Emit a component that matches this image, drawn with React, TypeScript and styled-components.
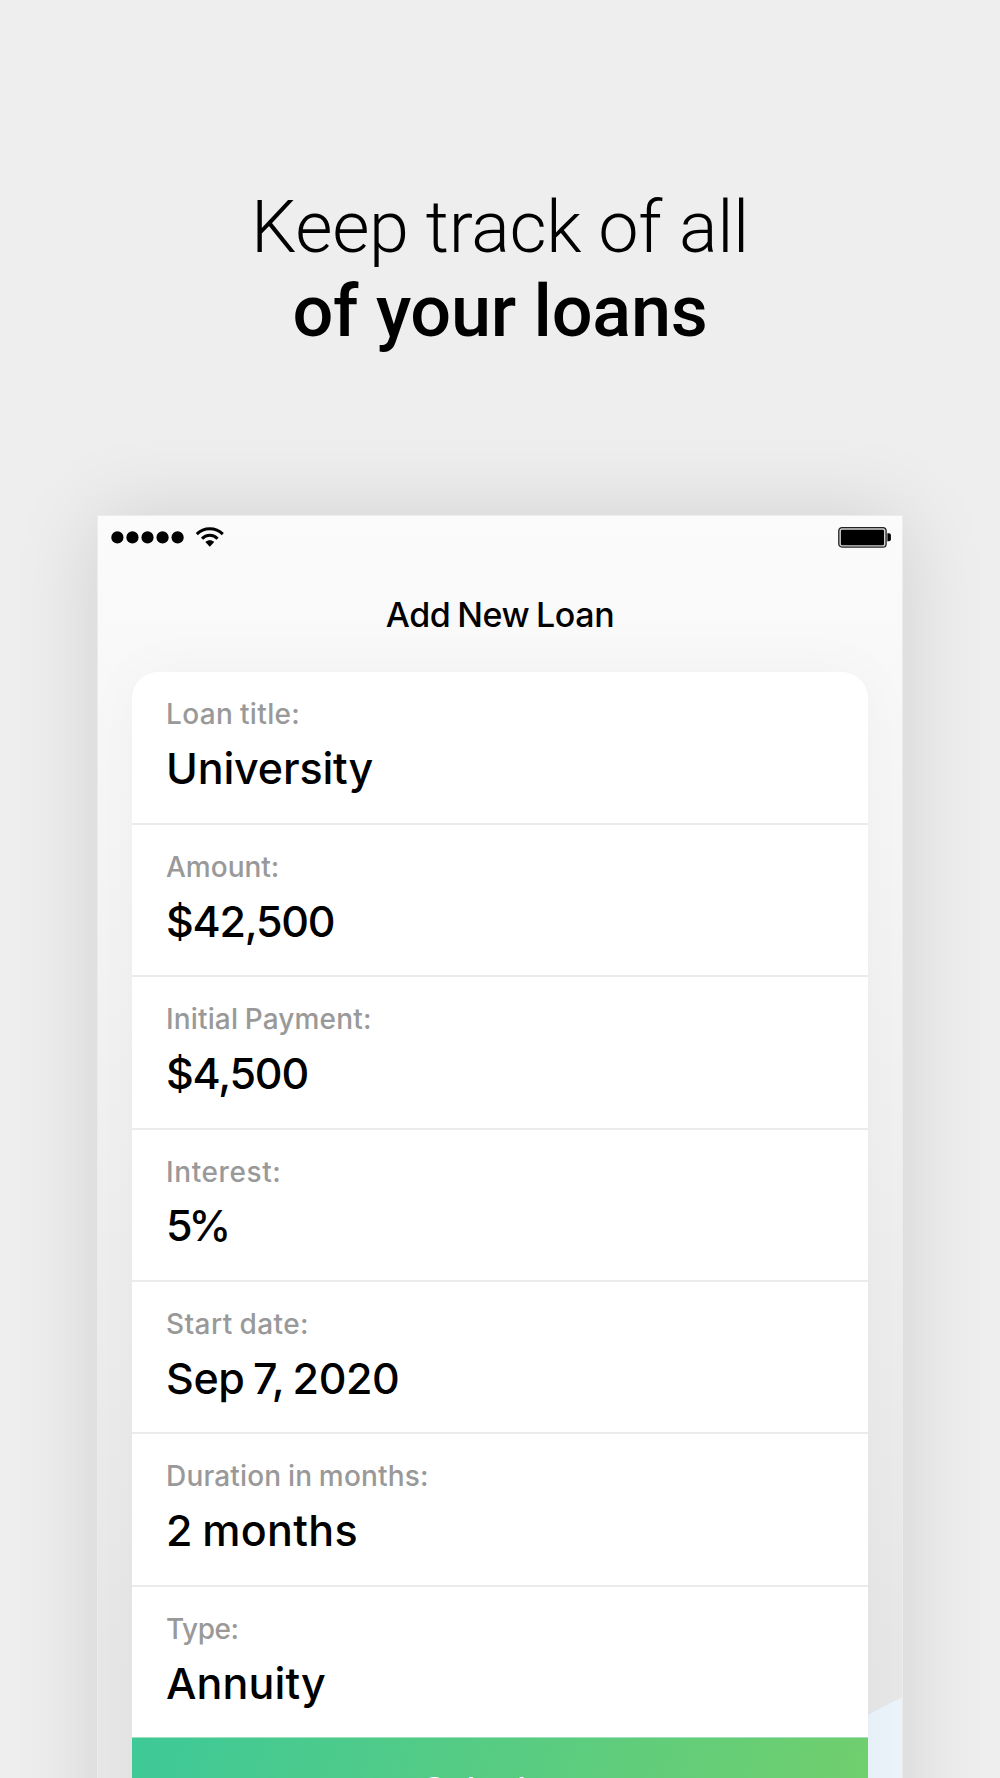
import React from "react";
import styled, { createGlobalStyle } from "styled-components";

const GlobalStyle = createGlobalStyle`
  *, *::before, *::after { box-sizing: border-box; }
  body { margin: 0; background: #eeeeee; }
`;

const Page = styled.main`
  height: 1778px;
  padding: 186px 97px 0;
  overflow: hidden;
  background: #eeeeee;
  color: #000;
  font-family: Inter, "Noto Sans", sans-serif;
`;

const Headline = styled.h1`
  margin: 0;
  height: 329px;
  font: 300 72px/84.4px Roboto, sans-serif;
  letter-spacing: -0.35px;
  text-align: center;
  white-space: nowrap;
`;

const Strong = styled.strong`
  display: block;
  font-weight: 500;
  letter-spacing: -0.25px;
`;

const Phone = styled.section`
  position: relative;
  height: 1400px;
  border: 1px solid #ececec;
  background: linear-gradient(#fbfbfb 0, #f9f9f9 110px, #e7e7e7 1150px);
  box-shadow: 0 2px 80px rgba(0, 0, 0, 0.128);
  overflow: hidden;
`;

const Blob = styled.div`
  position: absolute;
  left: 621px;
  top: 1158px;
  width: 600px;
  height: 600px;
  border-radius: 50%;
  background: #ebf3fb;
`;

const StatusBar = styled.div`
  display: flex;
  align-items: flex-start;
  gap: 10px;
  height: 78px;
  padding: 10px 10px 0 13px;
`;

const BatterySlot = styled.div`
  margin-left: auto;
  height: 23px;
`;

const Title = styled.h2`
  margin: 0 0 36.4px;
  font-size: 34px;
  font-weight: 500;
  line-height: 42px;
  letter-spacing: -0.4px;
  word-spacing: -2px;
  text-align: center;
`;

const Card = styled.div`
  position: relative;
  margin: 0 34px;
  border-radius: 26px 26px 0 0;
  background: #fff;
  box-shadow: 0 0 60px rgba(0, 0, 0, 0.035);
  overflow: hidden;
`;

const Field = styled.div`
  height: 152.4px;
  padding: 25px 34px 0;
  border-bottom: 2px solid #ebebeb;

  &:last-of-type {
    height: 150.4px;
    border-bottom: 0;
  }
`;

const Label = styled.div<{ $tracking: number }>`
  color: #999;
  font-size: 28px;
  font-weight: 500;
  line-height: 34px;
  letter-spacing: ${(p) => p.$tracking}px;
  word-spacing: -1px;
`;

const Value = styled.div<{ $tracking: number }>`
  margin-top: 10.9px;
  font-size: 43px;
  font-weight: 500;
  line-height: 52px;
  letter-spacing: ${(p) => p.$tracking}px;
  word-spacing: -2.5px;
`;

const Button = styled.button`
  display: flex;
  justify-content: center;
  width: 100%;
  height: 114px;
  padding: 30.4px 0 0;
  border: 0;
  border-top: 1px solid #a3dfba;
  background: linear-gradient(108deg, #3ec998, #72cf6c);
  color: #fff;
  font: 500 34px/42px Inter, sans-serif;
  letter-spacing: 0.6px;
`;

const fields = [
  { label: "Loan title:", value: "University", lt: 0.35, vt: -0.15 },
  { label: "Amount:", value: "$42,500", lt: 0, vt: -1.25 },
  { label: "Initial Payment:", value: "$4,500", lt: 0.15, vt: -1.2 },
  { label: "Interest:", value: "5%", lt: 0.6, vt: -4.2 },
  { label: "Start date:", value: "Sep 7, 2020", lt: 0.42, vt: -0.4 },
  { label: "Duration in months:", value: "2 months", lt: 0.17, vt: 0.35 },
  { label: "Type:", value: "Annuity", lt: -0.5, vt: 0.1 },
];

function SignalIcon() {
  return (
    <svg width="74" height="22" viewBox="0 0 74 22">
      {[0, 1, 2, 3, 4].map((n) => (
        <circle key={n} cx={6.4 + n * 15.05} cy="11.4" r="6.1" fill="#000" />
      ))}
    </svg>
  );
}

function WifiIcon() {
  return (
    <svg width="30" height="21.7" viewBox="0 0 29 21" fill="none" stroke="#000" strokeWidth="2.9">
      <path d="M1.7 7.9A17.9 17.9 0 0 1 26.9 7.9" />
      <path d="M6.8 12.3A10 10 0 0 1 21.8 12.3" />
      <path d="M10 15.6C12.4 13.1 16.2 13.1 18.6 15.6L14.3 20.2Z" fill="#000" stroke="none" />
    </svg>
  );
}

function BatteryIcon() {
  return (
    <svg width="54" height="22" viewBox="0 0 54 22">
      <rect x="0.8" y="1.6" width="47.3" height="19.5" rx="3.2" fill="#d2d2d2" stroke="#222" strokeWidth="1.3" />
      <rect x="2.9" y="3.7" width="43.1" height="15.5" rx="1.2" fill="#000" />
      <path d="M49.4 7.3h1.5q2 0 2 2v4q0 2-2 2h-1.5z" fill="#000" />
    </svg>
  );
}

export default function App() {
  return (
    <Page>
      <GlobalStyle />
      <Headline>
        Keep track of all
        <Strong>of your loans</Strong>
      </Headline>
      <Phone>
        <Blob />
        <StatusBar>
          <SignalIcon />
          <WifiIcon />
          <BatterySlot>
            <BatteryIcon />
          </BatterySlot>
        </StatusBar>
        <Title>Add New Loan</Title>
        <Card>
          {fields.map((f) => (
            <Field key={f.label}>
              <Label $tracking={f.lt}>{f.label}</Label>
              <Value $tracking={f.vt}>{f.value}</Value>
            </Field>
          ))}
          <Button>Calculate</Button>
        </Card>
      </Phone>
    </Page>
  );
}
